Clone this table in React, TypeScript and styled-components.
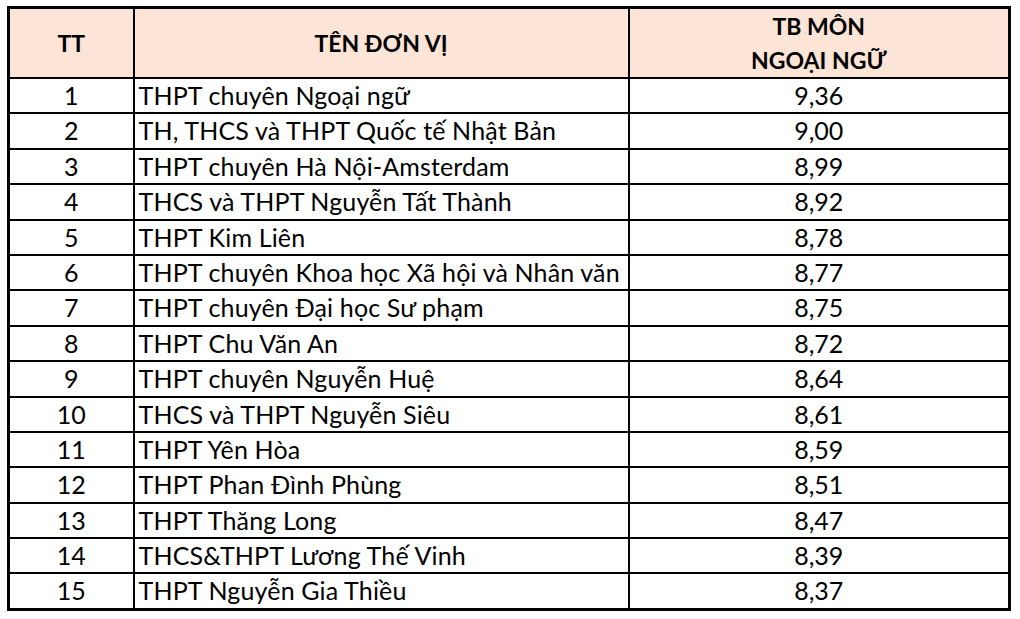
import React from 'react'
import styled, { createGlobalStyle } from 'styled-components'

const GlobalStyle = createGlobalStyle`
  html, body {
    margin: 0;
    padding: 0;
    background: #ffffff;
  }
  body {
    font-family: Lato, 'Noto Sans', sans-serif;
    color: #000;
  }
`

const Page = styled.div`
  width: 1020px;
  height: 619px;
  padding: 6px 0 0 7px;
  box-sizing: border-box;
  overflow: hidden;
`

const Table = styled.table`
  border-collapse: collapse;
  table-layout: fixed;
  width: 1004px;
  border: 3px solid #000;
  font-size: 25px;
`

const HeadCell = styled.th`
  background: #fce4d6;
  border: 2px solid #000;
  padding: 0;
  font-weight: 700;
  font-size: 23px;
  text-align: center;
  vertical-align: middle;
`

const HeadText = styled.div`
  height: 68px;
  display: flex;
  flex-direction: column;
  justify-content: center;
  line-height: 34px;
`

const Cell = styled.td<{ $align?: 'left' | 'center' }>`
  border: 2px solid #000;
  padding: 0 0 0 ${p => (p.$align === 'left' ? '4px' : '0')};
  text-align: ${p => p.$align ?? 'center'};
  vertical-align: middle;
  white-space: nowrap;
  letter-spacing: ${p => (p.$align === 'left' ? '0.15px' : '0')};
`

const CellText = styled.div`
  height: 33.4px;
  line-height: 33px;
  overflow: visible;
`

const rows: [string, string][] = [
  ['THPT chuyên Ngoại ngữ', '9,36'],
  ['TH, THCS và THPT Quốc tế Nhật Bản', '9,00'],
  ['THPT chuyên Hà Nội-Amsterdam', '8,99'],
  ['THCS và THPT Nguyễn Tất Thành', '8,92'],
  ['THPT Kim Liên', '8,78'],
  ['THPT chuyên Khoa học Xã hội và Nhân văn', '8,77'],
  ['THPT chuyên Đại học Sư phạm', '8,75'],
  ['THPT Chu Văn An', '8,72'],
  ['THPT chuyên Nguyễn Huệ', '8,64'],
  ['THCS và THPT Nguyễn Siêu', '8,61'],
  ['THPT Yên Hòa', '8,59'],
  ['THPT Phan Đình Phùng', '8,51'],
  ['THPT Thăng Long', '8,47'],
  ['THCS&THPT Lương Thế Vinh', '8,39'],
  ['THPT Nguyễn Gia Thiều', '8,37'],
]

export default function App() {
  return (
    <Page>
      <GlobalStyle />
      <Table>
        <colgroup>
          <col style={{ width: 125 }} />
          <col style={{ width: 495 }} />
          <col />
        </colgroup>
        <thead>
          <tr>
            <HeadCell>
              <HeadText>TT</HeadText>
            </HeadCell>
            <HeadCell>
              <HeadText>TÊN ĐƠN VỊ</HeadText>
            </HeadCell>
            <HeadCell>
              <HeadText>
                <span>TB MÔN</span>
                <span>NGOẠI NGỮ</span>
              </HeadText>
            </HeadCell>
          </tr>
        </thead>
        <tbody>
          {rows.map(([name, score], i) => (
            <tr key={name}>
              <Cell>
                <CellText>{i + 1}</CellText>
              </Cell>
              <Cell $align="left">
                <CellText>{name}</CellText>
              </Cell>
              <Cell>
                <CellText>{score}</CellText>
              </Cell>
            </tr>
          ))}
        </tbody>
      </Table>
    </Page>
  )
}
